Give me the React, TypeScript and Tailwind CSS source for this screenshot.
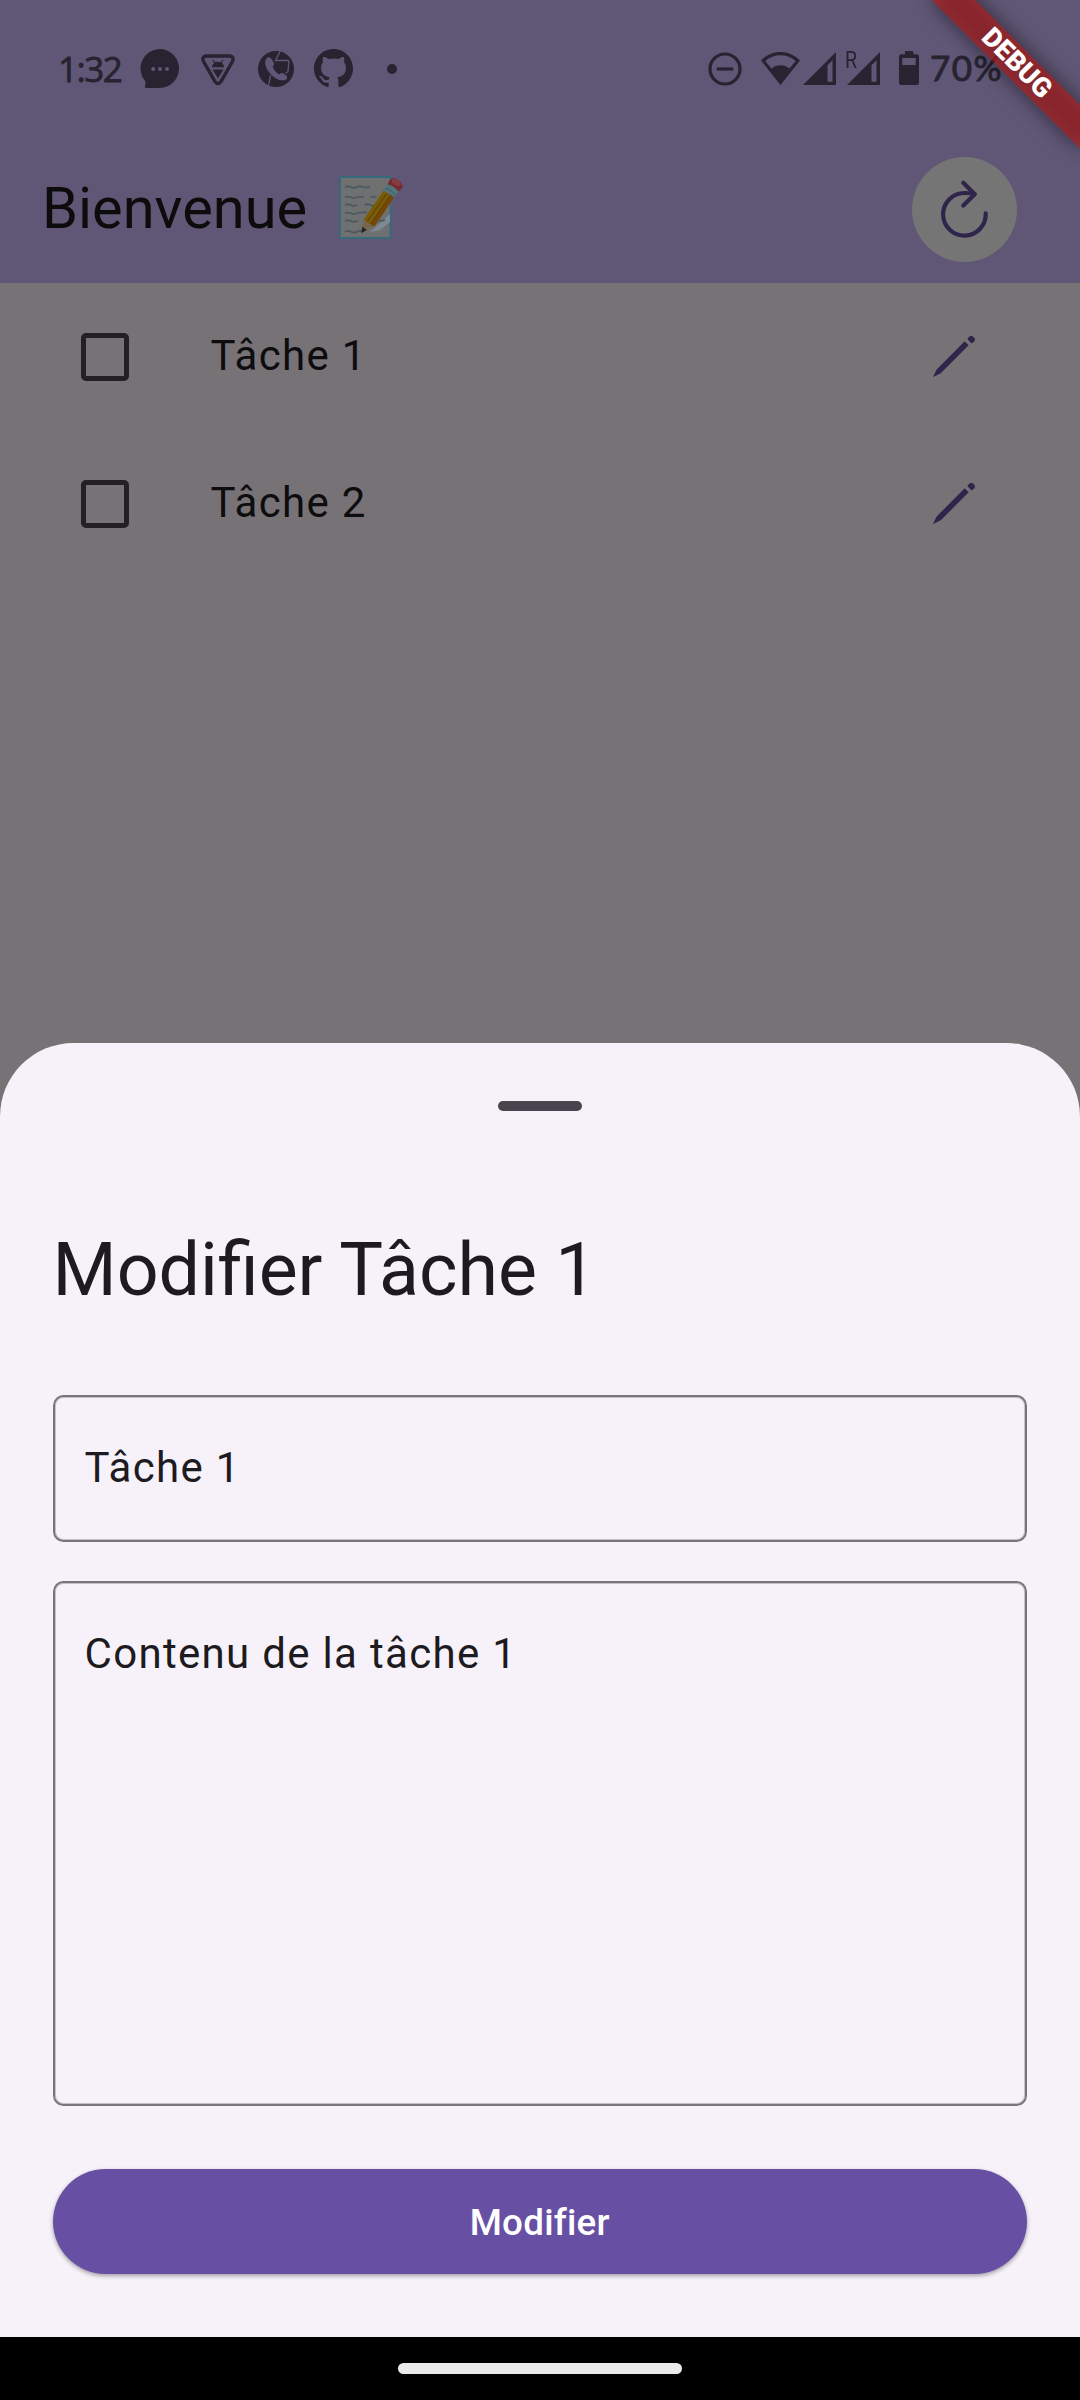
import React from "react";

const GITHUB =
  "M8 0C3.58 0 0 3.58 0 8c0 3.54 2.29 6.53 5.47 7.59.4.07.55-.17.55-.38 0-.19-.01-.82-.01-1.49-2.01.37-2.53-.49-2.69-.94-.09-.23-.48-.94-.82-1.13-.28-.15-.68-.52-.01-.53.63-.01 1.08.58 1.23.82.72 1.21 1.87.87 2.33.66.07-.52.28-.87.51-1.07-1.78-.2-3.64-.89-3.64-3.95 0-.87.31-1.59.82-2.15-.08-.2-.36-1.02.08-2.12 0 0 .67-.21 2.2.82.64-.18 1.32-.27 2-.27.68 0 1.36.09 2 .27 1.53-1.04 2.2-.82 2.2-.82.44 1.1.16 1.92.08 2.12.51.56.82 1.27.82 2.15 0 3.07-1.87 3.75-3.65 3.95.29.25.54.73.54 1.48 0 1.07-.01 1.93-.01 2.2 0 .21.15.46.55.38A8.013 8.013 0 0016 8c0-4.42-3.58-8-8-8z";

function MessageIcon() {
  return (
    <svg className="h-[39px] w-[39px]" viewBox="0 0 39 39" fill="currentColor">
      <path d="M19.500 0a19.500 19.500 0 0 1 0 39H5l.5-6.500A19.500 19.500 0 0 1 19.500 0Z" />
      <g fill="#605776">
        <circle cx="13.2" cy="20" r="2" />
        <circle cx="20" cy="20" r="2" />
        <circle cx="27" cy="20" r="2" />
      </g>
    </svg>
  );
}

function TriangleIcon() {
  return (
    <svg className="h-[32px] w-[34px]" viewBox="0 0 34 32" fill="currentColor">
      <path
        d="M5 2h24q4.600 1 2.400 5.500L20 27.500q-3 4.200-6 0L2.600 7.500Q.4 3 5 2Z"
        fill="none"
        stroke="currentColor"
        strokeWidth="3.400"
      />
      <path d="M11 13.200a6 5.500 0 0 1 12 0Z" />
      <path d="m12 6 2.400 3.500M22 6l-2.400 3.500" stroke="currentColor" strokeWidth="1.200" />
      <path d="M11.500 15.500h11L17 24.500Z" />
    </svg>
  );
}

function CallIcon() {
  return (
    <svg className="h-[36px] w-[36px]" viewBox="0 0 36 36">
      <circle cx="18" cy="18" r="18" fill="currentColor" />
      <g fill="none" stroke="#605776" strokeWidth="1.300">
        <path d="M22.300 0 17.500 9.500H29.500Q31 9.500 30.800 11L30 20.500 27.500 22.500" />
        <path d="M12.500 24 10.500 35" />
      </g>
      <path
        d="M9.500 6.500C6 8.500 6.500 15 10.500 20.500S20 29.800 26 29.300c2.800-.4 4-3 2.600-4.600l-3.400-2.400c-1.600-1-3 .2-4 1-3-1.500-5.500-4.500-6.600-7.800 1-1 2-2.300 1.200-3.800L13.300 7.800c-.8-1.600-2.400-2-3.800-1.300Z"
        fill="#605776"
      />
    </svg>
  );
}

function DoNotDisturbIcon() {
  return (
    <svg className="h-[34px] w-[34px]" viewBox="0 0 34 34" fill="none" stroke="currentColor" strokeWidth="3.200">
      <circle cx="17" cy="17" r="15" />
      <path d="M8.700 17h16.600" />
    </svg>
  );
}

function WifiIcon() {
  return (
    <svg className="h-[33px] w-[39px]" viewBox="0 0 39 33" fill="currentColor">
      <path
        fillRule="evenodd"
        d="M0 8.500C5.500 3 12 0 19.500 0S33.500 3 39 8.500L19.500 33ZM4.300 9 10.500 16.600C13 14.300 16 13.200 19.500 13.200S26 14.300 28.500 16.600L34.700 9C30.300 5.300 25.300 3.300 19.500 3.300S8.700 5.300 4.300 9Z"
      />
    </svg>
  );
}

function SignalIcon() {
  return (
    <svg className="h-[33px] w-[33px]" viewBox="0 0 33 33" fill="currentColor">
      <path fillRule="evenodd" d="M33 0v33H0ZM29.500 8.200 24.500 13.300V29.700h5Z" />
    </svg>
  );
}

function BatteryIcon() {
  return (
    <svg className="h-[34px] w-[20px]" viewBox="0 0 20 34" fill="currentColor">
      <path
        fillRule="evenodd"
        d="M6 0h8.300v3.300H17.500Q20 3.300 20 5.800V31.500Q20 34 17.500 34h-15Q0 34 0 31.500V5.800Q0 3.300 2.500 3.300H6ZM3.300 7v7H16.700V7Z"
      />
    </svg>
  );
}

function MemoIcon() {
  return (
    <svg className="h-[64px] w-[65px]" viewBox="0 0 65 64" fill="none">
      <rect x="1" y="1" width="50.500" height="61" rx="1" fill="#6f7171" stroke="#376b7c" strokeWidth="2" />
      <path d="M31 56 51 38V46L41 54Z" fill="#7d8a94" />
      <g stroke="#4d5960" strokeWidth="1.800">
        <path d="M6 11q3-1.500 6 0t6 0 6 0 7-.5" />
        <path d="M6 21.300q3-1.500 6 0t6 0 6.500 0M31.500 21.300q3-1.500 6 0" />
        <path d="M6 29q3-1.500 6 0t6.500 0M25.500 29q3-1.500 6 0t6 0" />
        <path d="M6 37.300q3-1.500 6 0t6 0 10-.8" />
        <path d="M6 45q3-1.500 6 0t7 0M40 45l6-.8" />
        <path d="M6 55.700q3-1.500 6 0t6 0 6 0" />
      </g>
      <path d="m22.200 57 3-14.500 10.500 7.200Z" fill="#75674d" />
      <path d="m22.200 57 1.200-6.200 4.500 3.200Z" fill="#262324" />
      <path d="M25 43 44.500 14.500 55 21.500 36 49.500Q33 51 31.800 48 28.500 48.500 28.300 45.500 25.500 46 25 43Z" fill="#7a5c08" />
      <path d="M31.800 48 51.500 19.200 55 21.500 36 49.500Q33 51 31.800 48Z" fill="#75480a" />
      <path d="M28.300 45.500 48 16.900M31.800 48 51.500 19.200" stroke="#5d3a05" strokeWidth="1" />
      <path d="m44.500 14.500 4-6.300q7.500 1.500 11 7.300l-4.300 6q-5-5.500-10.700-7Z" fill="#52747c" />
      <path d="M46 12q6 1.500 10.800 7.300" stroke="#3c5e68" strokeWidth="1" />
      <path d="M48.500 8.200 51 4q2.500-3.200 7-.6 6.500 4 5.300 8.300L59.500 15.500Q55.500 9.800 48.500 8.200Z" fill="#762a2f" />
      <ellipse cx="57.200" cy="6.500" rx="5" ry="2.800" transform="rotate(33 57.200 6.500)" fill="#853c40" />
    </svg>
  );
}

function RefreshIcon() {
  return (
    <svg
      className="h-[105px] w-[105px]"
      viewBox="0 0 105 105"
      fill="none"
      stroke="#2f254b"
      strokeWidth="4.200"
      strokeLinecap="round"
      strokeLinejoin="round"
    >
      <path d="M73.700 56.300A21.300 21.300 0 1 1 52.300 36q6 0 10.200 1" />
      <path d="M51.300 25.700 62.800 37.200 51.300 48.500" />
    </svg>
  );
}

function PencilIcon() {
  return (
    <svg className="h-[43px] w-[43px]" viewBox="0 0 43 43" fill="#2f254b">
      <path d="M31.700 6.300 35.700 10.300 8.500 37.500Q7.500 38.500 6.200 39L.8 41.800Q0 42 .3 41.200L2.900 36Q3.400 34.700 4.400 33.700Z" />
      <path d="M34.300 4 36.600 1.300Q38.300.1 40.200 1.700L41.500 3Q42.800 4.700 41.300 6.300L38.600 8.600Z" />
    </svg>
  );
}

function TaskRow({ label }: { label: string }) {
  return (
    <li className="flex h-[147px] items-center pr-[104px] pl-[81px]">
      <span className="h-12 w-12 rounded-[5px] border-[5px] border-[#222024]" />
      <span className="mb-[2px] ml-[81.5px] flex-1 text-[42px] leading-[62px] tracking-[1.31px] text-[#0d0c0f]">
        {label}
      </span>
      <PencilIcon />
    </li>
  );
}

function DebugBanner() {
  return (
    <div className="absolute top-0 right-0 h-0 w-0 origin-top-left rotate-45">
      <div className="absolute top-[73.5px] left-[-105px] h-[31.5px] w-[210px] bg-black/50 blur-[10.4px]" />
      <div className="absolute top-[73.5px] left-[-105px] flex h-[31.5px] w-[210px] items-center justify-center bg-[#b71c1c]/63 text-[27px] leading-none font-black text-white">
        DEBUG
      </div>
    </div>
  );
}

export default function App() {
  return (
    <div className="relative flex h-[2400px] w-[1080px] flex-col overflow-hidden bg-[#777275] font-['Roboto',sans-serif]">
      <header className="h-[283px] bg-[#605776]">
        <div className="flex h-[136px] items-center pt-px pr-[76px] pl-[58px] text-[35px] text-[#272330]">
          <span className="w-[82px] font-['Open_Sans',sans-serif] leading-none font-medium tracking-[-1.5px] [-webkit-text-stroke:0.8px_#272330]">
            1:32
          </span>
          <MessageIcon />
          <span className="mt-[3px] ml-[22px]"><TriangleIcon /></span>
          <span className="ml-[23px]"><CallIcon /></span>
          <svg className="ml-5 h-[39px] w-[39px]" viewBox="0 0 16 16" fill="currentColor">
            <path d={GITHUB} />
          </svg>
          <span className="ml-[34px] h-[10px] w-[10px] rounded-full bg-[#272330]" />
          <span className="ml-auto"><DoNotDisturbIcon /></span>
          <span className="mb-px ml-[19px]"><WifiIcon /></span>
          <span className="mb-px ml-[3px]"><SignalIcon /></span>
          <span className="relative mb-px ml-[11px]">
            <span className="absolute -top-[3px] -left-[2px] origin-left scale-x-85 text-[23px] leading-none">R</span>
            <SignalIcon />
          </span>
          <span className="mb-[2px] ml-[19px]"><BatteryIcon /></span>
          <span className="mb-[2px] ml-[11px] w-[74px] font-['Lato',sans-serif] leading-none tracking-[1.5px] whitespace-nowrap [-webkit-text-stroke:0.9px_#272330]">
            70%
          </span>
        </div>
        <div className="flex h-[147px] items-center pr-[63px] pl-[42px]">
          <h1 className="mb-[3px] text-[57.75px] leading-[74px] text-[#0c0c0d]">Bienvenue</h1>
          <span className="mb-[3px] ml-[32px]"><MemoIcon /></span>
          <button className="ml-auto rounded-full bg-[#757575]"><RefreshIcon /></button>
        </div>
      </header>

      <ul className="h-[760px]">
        <TaskRow label="Tâche 1" />
        <TaskRow label="Tâche 2" />
      </ul>

      <section className="flex h-[1294px] flex-col rounded-t-[73.5px] bg-[#f7f2fa] pr-[53px] pl-[52.5px] text-[#1d1b20]">
        <span className="mt-[57.5px] h-[10.5px] w-[84px] self-center rounded-full bg-[#49454f]" />
        <h2 className="mt-[111px] text-[73.5px] leading-[96px]">Modifier Tâche 1</h2>
        <div className="mt-[77px] flex h-[147px] items-center rounded-[10.5px] border-2 border-[#79747e] px-[30px] pb-[2px] text-[42px] tracking-[1.31px] shadow-[inset_0_0_0_1px_rgba(121,116,126,0.4)]">
          Tâche 1
        </div>
        <div className="mt-[39px] h-[525px] rounded-[10.5px] border-2 border-[#79747e] px-[30px] pt-[39px] text-[42px] leading-[63px] tracking-[1.31px] shadow-[inset_0_0_0_1px_rgba(121,116,126,0.4)]">
          Contenu de la tâche 1
        </div>
        <button className="mt-[63px] h-[105px] shrink-0 rounded-full bg-[#6750a4] pt-[2px] text-[36.75px] font-medium tracking-[0.26px] text-white shadow-[0_2px_4px_rgba(0,0,0,0.35)]">
          Modifier
        </button>
      </section>

      <footer className="flex flex-1 items-center justify-center bg-black">
        <span className="h-[11px] w-[284px] rounded-full bg-[#ebebeb]" />
      </footer>

      <DebugBanner />
    </div>
  );
}
